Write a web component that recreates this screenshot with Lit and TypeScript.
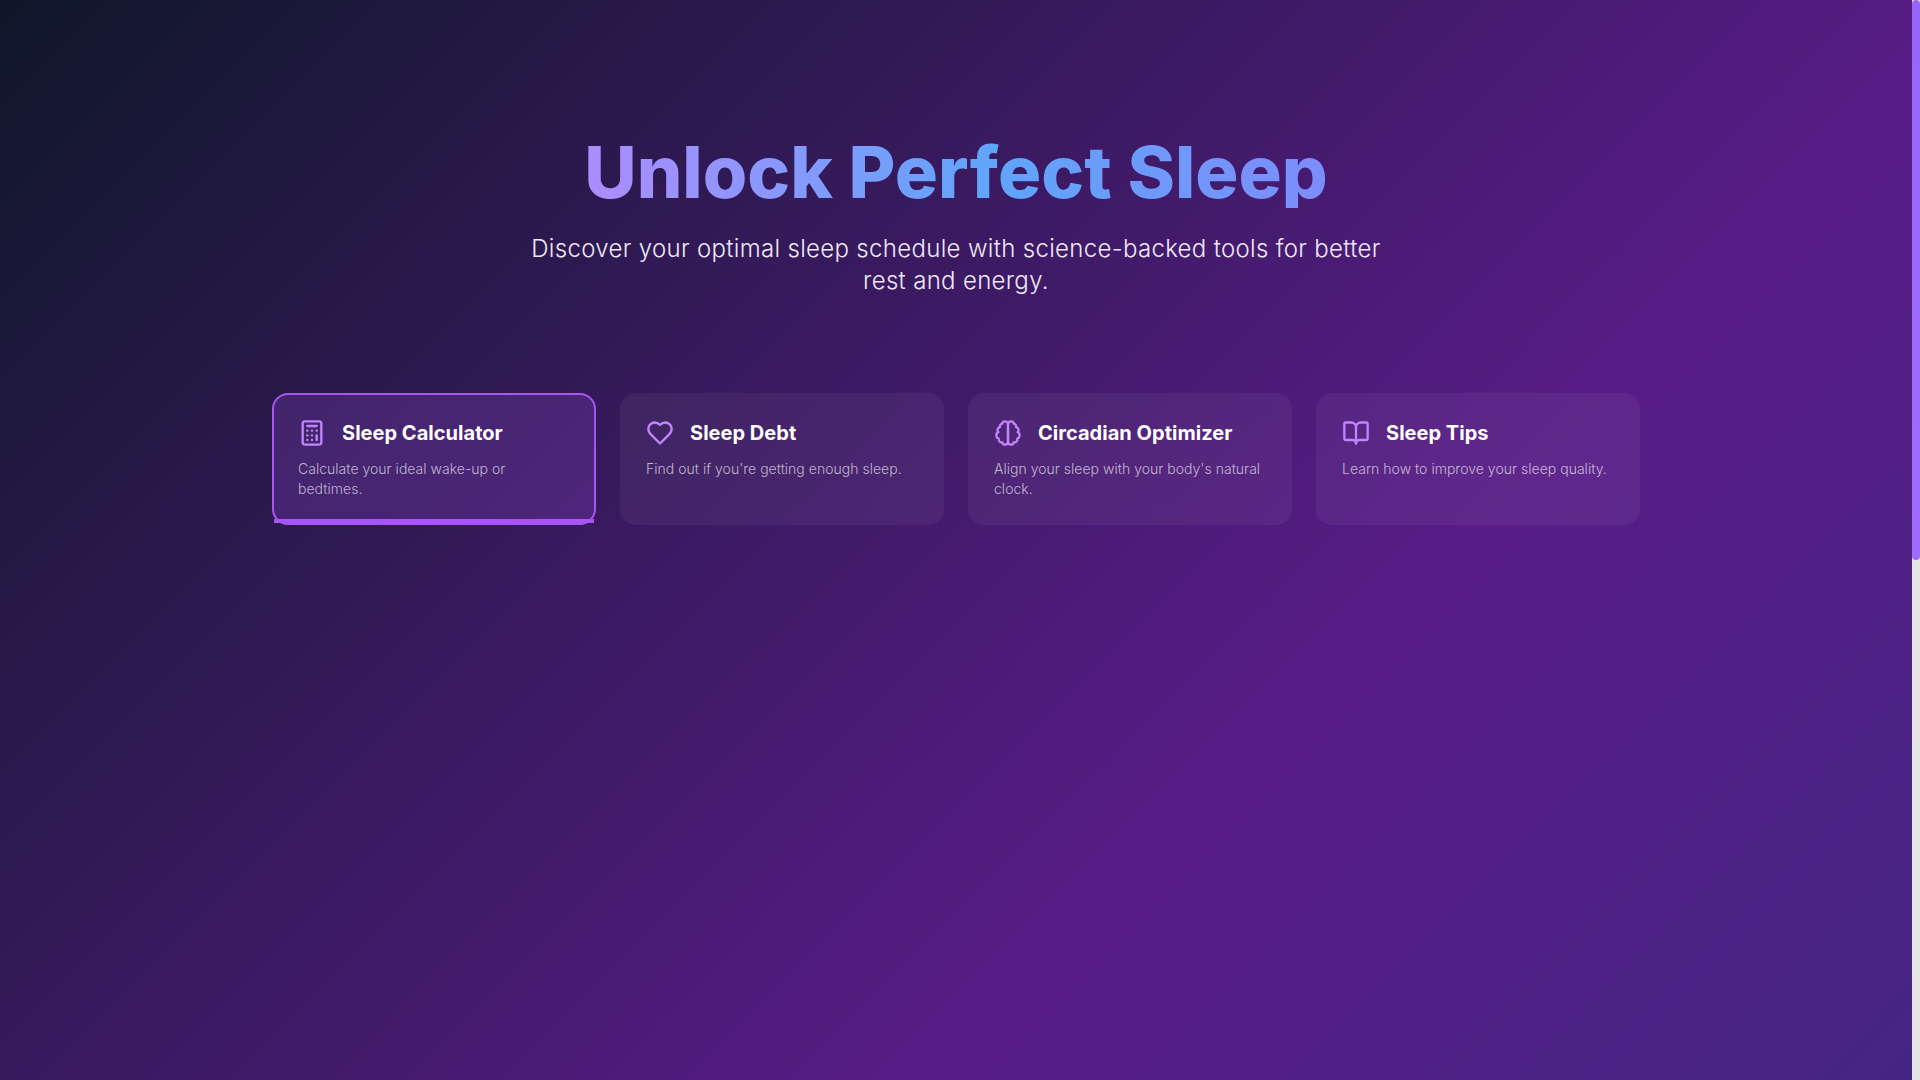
import { LitElement, html, css, svg } from "lit";
import { customElement } from "lit/decorators.js";

const icons = {
  calc: svg`<rect width="16" height="20" x="4" y="2" rx="2"/><line x1="8" x2="16" y1="6" y2="6"/><line x1="16" x2="16" y1="14" y2="18"/><path d="M16 10h.01"/><path d="M12 10h.01"/><path d="M8 10h.01"/><path d="M12 14h.01"/><path d="M8 14h.01"/><path d="M12 18h.01"/><path d="M8 18h.01"/>`,
  heart: svg`<path d="M19 14c1.49-1.46 3-3.21 3-5.5A5.5 5.5 0 0 0 16.5 3c-1.76 0-3 .5-4.5 2-1.5-1.5-2.74-2-4.5-2A5.5 5.5 0 0 0 2 8.5c0 2.3 1.5 4.05 3 5.5l7 7Z"/>`,
  brain: svg`<path d="M9.5 2A2.5 2.5 0 0 1 12 4.5v15a2.5 2.5 0 0 1-4.96.44 2.5 2.5 0 0 1-2.96-3.08 3 3 0 0 1-.34-5.58 2.5 2.5 0 0 1 1.32-4.24 2.5 2.5 0 0 1 1.98-3A2.5 2.5 0 0 1 9.5 2Z"/><path d="M14.5 2A2.5 2.5 0 0 0 12 4.5v15a2.5 2.5 0 0 0 4.96.44 2.5 2.5 0 0 0 2.96-3.08 3 3 0 0 0 .34-5.58 2.5 2.5 0 0 0-1.32-4.24 2.5 2.5 0 0 0-1.98-3A2.5 2.5 0 0 0 14.5 2Z"/>`,
  book: svg`<path d="M12 7v14"/><path d="M3 18a1 1 0 0 1-1-1V4a1 1 0 0 1 1-1h5a4 4 0 0 1 4 4 4 4 0 0 1 4-4h5a1 1 0 0 1 1 1v13a1 1 0 0 1-1 1h-6a3 3 0 0 0-3 3 3 3 0 0 0-3-3z"/>`,
};

const cards = [
  { icon: icons.calc, title: "Sleep Calculator", desc: "Calculate your ideal wake-up or bedtimes.", active: true },
  { icon: icons.heart, title: "Sleep Debt", desc: "Find out if you're getting enough sleep.", active: false },
  { icon: icons.brain, title: "Circadian Optimizer", desc: "Align your sleep with your body's natural clock.", active: false },
  { icon: icons.book, title: "Sleep Tips", desc: "Learn how to improve your sleep quality.", active: false },
];

@customElement("app-root")
export class AppRoot extends LitElement {
  static styles = css`
    :host { display: block; font-family: Inter, "Liberation Sans", sans-serif; }
    .viewport { height: 100vh; overflow: hidden; display: flex; align-items: flex-start; }
    .rail { flex: none; width: 8px; height: 100vh; background: #e5e5e5; }
    .thumb { height: 560px; border-radius: 4px; background: linear-gradient(180deg, #9466fb, #a06cff); }
    .page {
      flex: 1; min-width: 0; min-height: 2083px; box-sizing: border-box;
      background: linear-gradient(135deg, #0f172a 0%, #581c87 50%, #312e81 100%);
      padding: 136px 16px 0; display: flex; flex-direction: column; align-items: center;
    }
    h1 {
      margin: 0; font-size: 72px; line-height: 72px; font-weight: 800; display: inline-block;
      background: linear-gradient(90deg, #ad8cff 0%, #60a5fa 55%, #7d8dfb 100%);
      -webkit-background-clip: text; background-clip: text; color: transparent;
    }
    .sub {
      margin: 25px 0 0; max-width: 896px; text-align: center; font-size: 24px; line-height: 32px;
      color: #efe9fa; font-weight: 300; letter-spacing: 0.32px;
    }
    .grid {
      margin-top: 96px; width: 1368px; display: grid; grid-template-columns: repeat(4, 1fr); gap: 24px;
    }
    .card {
      position: relative; box-sizing: border-box; padding: 24px; border: 2px solid transparent;
      border-radius: 16px; background: rgba(255, 255, 255, 0.05); background-clip: border-box;
    }
    .card.active { border-color: #a855f7; background: rgba(168, 85, 247, 0.2); }
    .bar { position: absolute; left: 0; right: 0; bottom: 0; height: 4px; background: #a855f7; }
    .head { display: flex; align-items: center; gap: 16px; margin-bottom: 12px; }
    .head svg { width: 28px; height: 28px; flex: none; fill: none; stroke: #c084fc; stroke-width: 2; stroke-linecap: round; stroke-linejoin: round; }
    h3 { margin: 0; font-size: 20px; line-height: 28px; font-weight: 700; color: #fff; letter-spacing: 0.03px; }
    .card p { margin: 0; font-size: 14px; line-height: 20px; color: rgba(255, 255, 255, 0.66); font-weight: 300; letter-spacing: 0.02px; }
  `;

  render() {
    return html`
      <div class="viewport">
        <div class="page">
          <h1>Unlock Perfect Sleep</h1>
          <p class="sub">Discover your optimal sleep schedule with science-backed tools for better rest and energy.</p>
          <div class="grid">
            ${cards.map(c => html`
              <div class="card ${c.active ? "active" : ""}">
                <div class="head">
                  <svg viewBox="0 0 24 24">${c.icon}</svg>
                  <h3>${c.title}</h3>
                </div>
                <p>${c.desc}</p>
                ${c.active ? html`<div class="bar"></div>` : ""}
              </div>`)}
          </div>
        </div>
        <div class="rail"><div class="thumb"></div></div>
      </div>
    `;
  }
}
